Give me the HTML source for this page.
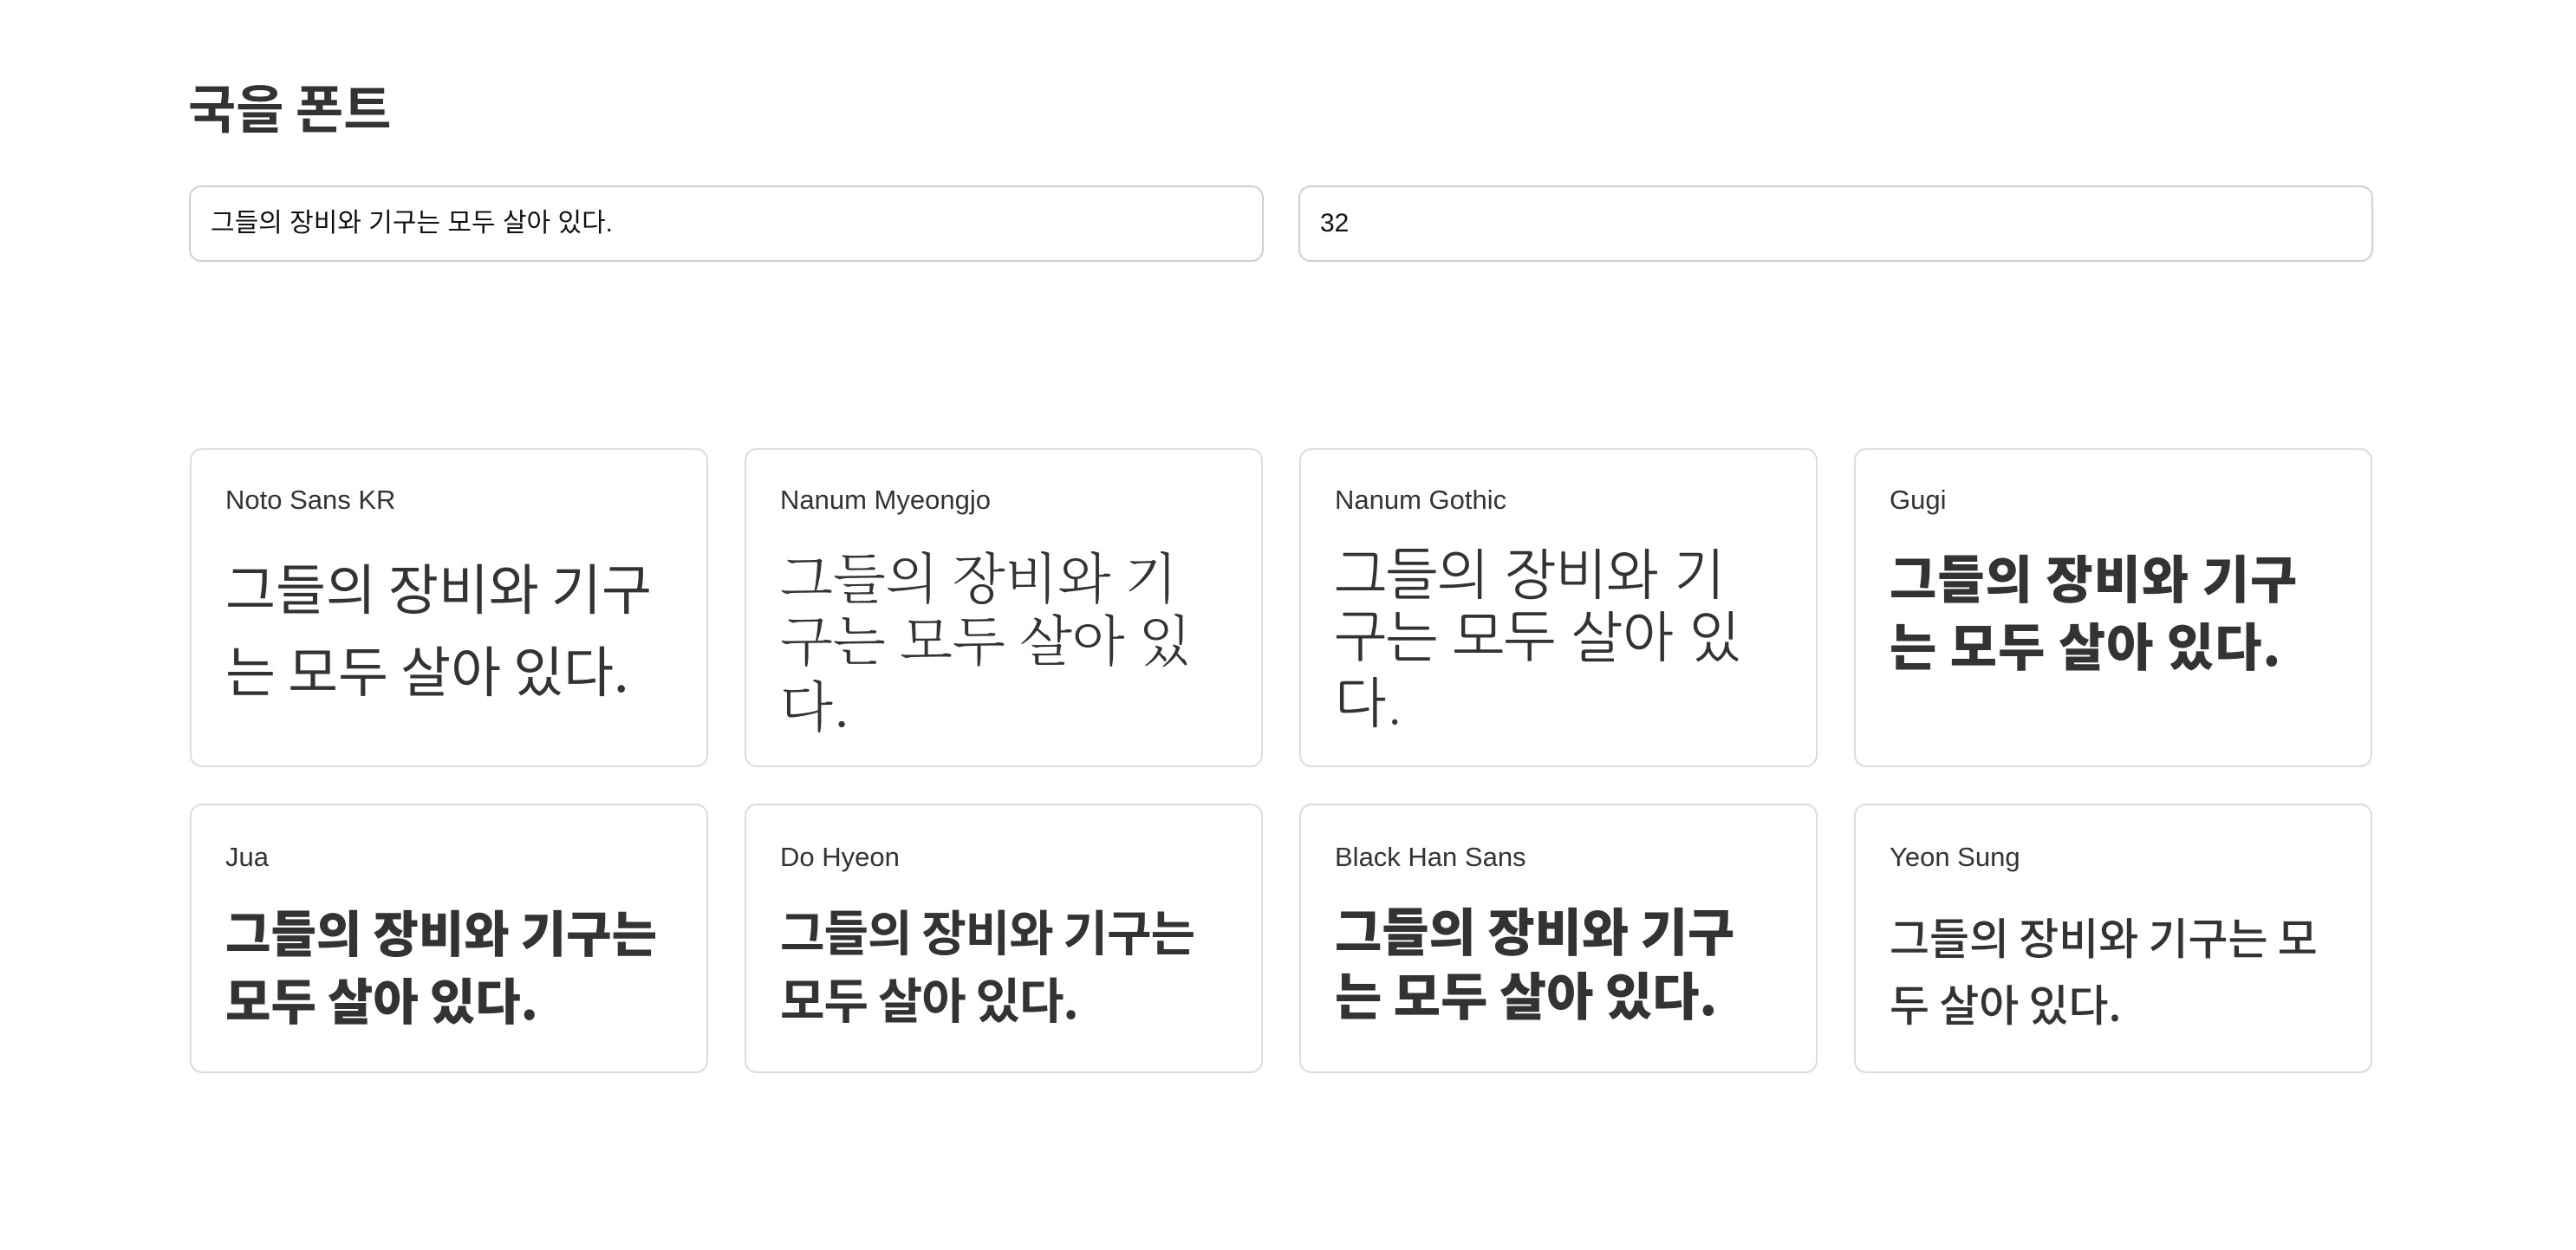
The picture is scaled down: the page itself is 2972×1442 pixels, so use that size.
<!DOCTYPE html>
<html><head><meta charset="utf-8"><style>
*{margin:0;padding:0;box-sizing:border-box}
body{width:2972px;height:1442px;background:#fff;position:relative;overflow:hidden;font-family:"Liberation Sans","Noto Sans CJK KR",sans-serif;color:#333}
h1{position:absolute;left:217px;top:88px;font-size:60px;font-weight:700;line-height:70px;color:#333;font-family:"Noto Sans CJK KR",sans-serif}
.inp{position:absolute;top:214px;height:88px;width:1240px;border:2px solid #cfcfd3;border-radius:14px;font-size:30px;line-height:84px;padding-left:23px;color:#111;font-family:"Liberation Sans","Noto Sans CJK KR",sans-serif}
.card{position:absolute;width:598px;border:2px solid #dcdce0;border-radius:14px}
.lab{position:absolute;left:39px;font-size:31px;line-height:36px;color:#333}
.s{position:absolute;left:39px;white-space:nowrap;color:#333;font-family:"Noto Sans CJK KR",sans-serif}
</style></head><body>
<h1>국을 폰트</h1>
<div class="inp" style="left:218px">그들의 장비와 기구는 모두 살아 있다.</div>
<div class="inp" style="left:1498px;width:1240px">32</div>

<div class="card" style="left:219px;top:517px;height:368px">
 <div class="lab" style="top:40px">Noto Sans KR</div>
 <div class="s" style="top:115px;font-size:63px;line-height:86px">그들의 장비와 기구</div>
 <div class="s" style="top:210px;font-size:63px;line-height:86px">는 모두 살아 있다.</div>
</div>
<div class="card" style="left:859px;top:517px;height:368px">
 <div class="lab" style="top:40px">Nanum Myeongjo</div>
 <div class="s" style="top:108px;font-size:63px;line-height:74px;font-family:'Noto Serif CJK SC',serif;font-weight:300">그들의 장비와 기</div>
 <div class="s" style="top:180px;font-size:63px;line-height:74px;font-family:'Noto Serif CJK SC',serif;font-weight:300">구는 모두 살아 있</div>
 <div class="s" style="top:256px;font-size:63px;line-height:74px;font-family:'Noto Serif CJK SC',serif;font-weight:300">다.</div>
</div>
<div class="card" style="left:1499px;top:517px;height:368px">
 <div class="lab" style="top:40px">Nanum Gothic</div>
 <div class="s" style="top:108px;font-size:63px;line-height:74px;font-family:'NanumGothic',sans-serif">그들의 장비와 기</div>
 <div class="s" style="top:180px;font-size:63px;line-height:74px;font-family:'NanumGothic',sans-serif">구는 모두 살아 있</div>
 <div class="s" style="top:256px;font-size:63px;line-height:74px;font-family:'NanumGothic',sans-serif">다.</div>
</div>
<div class="card" style="left:2139px;top:517px;height:368px">
 <div class="lab" style="top:40px">Gugi</div>
 <div class="s" style="top:109px;font-size:59px;line-height:74px;font-weight:900;letter-spacing:1px">그들의 장비와 기구</div>
 <div class="s" style="top:187px;font-size:59px;line-height:74px;font-weight:900;letter-spacing:1px">는 모두 살아 있다.</div>
</div>

<div class="card" style="left:219px;top:927px;height:311px">
 <div class="lab" style="top:42px">Jua</div>
 <div class="s" style="top:108px;font-size:57px;line-height:74px;font-weight:900">그들의 장비와 기구는</div>
 <div class="s" style="top:186px;font-size:57px;line-height:74px;font-weight:900">모두 살아 있다.</div>
</div>
<div class="card" style="left:859px;top:927px;height:311px">
 <div class="lab" style="top:42px">Do Hyeon</div>
 <div class="s" style="top:108px;font-size:56px;line-height:74px;font-weight:700;letter-spacing:-1px">그들의 장비와 기구는</div>
 <div class="s" style="top:186px;font-size:56px;line-height:74px;font-weight:700;letter-spacing:-1px">모두 살아 있다.</div>
</div>
<div class="card" style="left:1499px;top:927px;height:311px">
 <div class="lab" style="top:42px">Black Han Sans</div>
 <div class="s" style="top:106px;font-size:59px;line-height:74px;font-weight:900">그들의 장비와 기구</div>
 <div class="s" style="top:180px;font-size:59px;line-height:74px;font-weight:900">는 모두 살아 있다.</div>
</div>
<div class="card" style="left:2139px;top:927px;height:311px">
 <div class="lab" style="top:42px">Yeon Sung</div>
 <div class="s" style="top:114px;font-size:50px;line-height:74px;font-weight:500">그들의 장비와 기구는 모</div>
 <div class="s" style="top:191px;font-size:50px;line-height:74px;font-weight:500">두 살아 있다.</div>
</div>
</body></html>
